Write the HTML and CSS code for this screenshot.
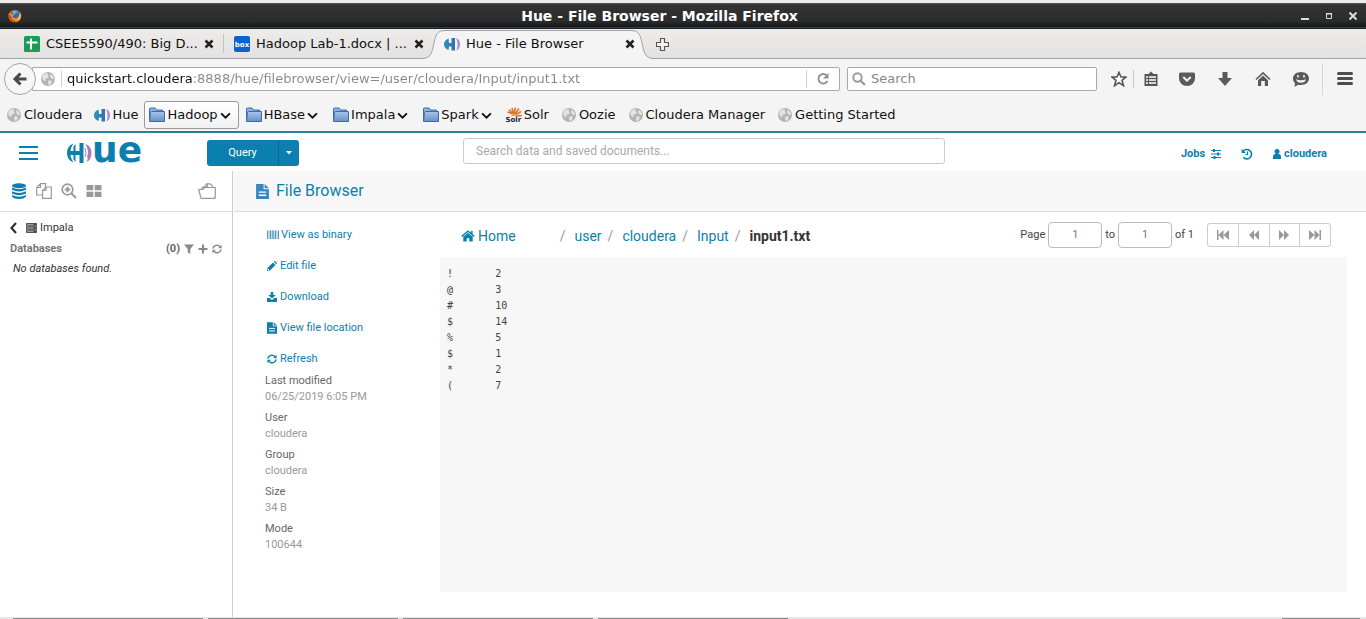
FILE: index.html
```html
<!DOCTYPE html>
<html lang="en">
<head>
<meta charset="utf-8">
<title>Hue - File Browser</title>
<link rel="stylesheet" href="styles.css">
</head>
<body>
<svg class="sprite" aria-hidden="true">
  <defs>
    <linearGradient id="folder-fill" x1="0" y1="0" x2="0" y2="1"><stop offset="0" stop-color="#a9c6ea"/><stop offset="1" stop-color="#6690c8"/></linearGradient>
    <linearGradient id="hue-blue" x1="0" y1="0" x2="1" y2="0"><stop offset="0" stop-color="#2e93b8"/><stop offset="1" stop-color="#2f6fb5"/></linearGradient>
    <symbol id="i-globe" viewBox="0 0 16 16"><circle cx="8" cy="8" r="7" fill="#b4b4b4"/><path d="M2.500 4.500L5 2.500L8 2L7.500 4L9 5.500L7 7.500L5 7.500L6 9.500L4.500 10L2.500 8zM10 3L13 4.500L14 8L12 8L10.500 6.500zM9 9L12 10L10.500 13.500L8.500 14L8 11z" fill="#e4e4e4"/></symbol>
    <symbol id="i-hue" viewBox="0 0 16 16"><path d="M4.500 2.500C1 4 0 6 0 8.500S1.500 13 4.500 14L5 10.500H7.500V14.500H11V2H7.500V7H5z" fill="url(#hue-blue)"/><path d="M12 2C14.800 3 16 5.500 16 8.500S14.500 13.500 12.500 14.500C14 11 14 5.500 12 2z" fill="#a98bc8"/></symbol>
    <symbol id="i-folder" viewBox="0 0 16 16"><path d="M.5 13.500V2Q.5 1 1.500 1H6L7.500 3H13.500V5" fill="#8fb3e0" stroke="#3f6aa8"/><path d="M.5 14.500L1.500 5.500Q1.500 4.500 2.500 4.500H15.500V14.500z" fill="url(#folder-fill)" stroke="#3f6aa8"/></symbol>
    <symbol id="i-chev" viewBox="0 0 10 8"><path d="M1 2L5 6L9 2" fill="none" stroke="#111" stroke-width="1.700"/></symbol>
    <symbol id="i-close" viewBox="0 0 10 10"><path d="M1.500 1.500L8.500 8.500M8.500 1.500L1.500 8.500" stroke="#222" stroke-width="2.600"/></symbol>
    <symbol id="i-file" viewBox="0 0 12 14"><path d="M0 0H7V5H12V14H0zM8 0L12 4H8z" fill="currentColor"/><path d="M2.500 7.500H9.500M2.500 10.500H9.500" stroke="#fff" stroke-width="1.200"/></symbol>
    <symbol id="i-refresh" viewBox="0 0 12 12"><path d="M1 5.500A5 5 0 0 1 9.500 3M11 6.500A5 5 0 0 1 2.500 9" fill="none" stroke="currentColor" stroke-width="1.700"/><path d="M11.500 .8V5H7.300zM.5 11.200V7H4.700z" fill="currentColor"/></symbol>
    <symbol id="i-house" viewBox="0 0 16 14"><path d="M8 3.500L13.500 8V13.500H9.500V9.500H6.500V13.500H2.500V8z" fill="currentColor"/><path d="M.7 7.500L8 1.300L15.300 7.500M12.500 1V4.500" fill="none" stroke="currentColor" stroke-width="1.700"/></symbol>
  </defs>
</svg>

<div class="desktop-edge"></div>
<header class="titlebar">
  <svg class="firefox" viewBox="0 0 16 16" aria-hidden="true"><circle cx="8" cy="8" r="7.200" fill="#e8641b"/><circle cx="8.500" cy="6.500" r="5" fill="#2d6fb4"/><path d="M5 2.500Q9 1 11.500 4Q8 3.500 7.500 6.500Q6 6 5 2.500z" fill="#6db4e6"/><path d="M1 4.500Q2.500 5.500 4.500 5.500Q7 6 6.500 7.500L5 8.500Q6 11 9 10.500Q12.500 10 13 5Q16 8.500 13 12.500Q9 16.500 4 14Q-.5 11 1 4.500z" fill="#f08a24"/><path d="M13.500 4Q16 8 13.500 11.500Q11.500 13.500 9.500 13.500Q13.500 10.500 13.500 4z" fill="#f6cb45"/><path d="M1 6Q1 11 5 14Q8 15.500 10.500 14.800Q4 14 3 8z" fill="#c9331c"/></svg>
  <h1 class="window-title">Hue - File Browser - Mozilla Firefox</h1>
  <div class="window-controls">
    <button type="button" aria-label="Minimize"><svg viewBox="0 0 8 8"><path d="M0 7H8" stroke="#ddd" stroke-width="2"/></svg></button>
    <button type="button" aria-label="Maximize"><svg viewBox="0 0 8 8"><path d="M1.500 2H6.500V6.500H1.500z" fill="none" stroke="#ddd"/><path d="M1 1.500H7" stroke="#ddd"/></svg></button>
    <button type="button" aria-label="Close"><svg viewBox="0 0 8 8"><path d="M.5 .5L7.500 7.500M7.500 .5L.5 7.500" stroke="#ddd" stroke-width="2"/></svg></button>
  </div>
</header>

<nav class="tabs" aria-label="Tabs">
  <div class="tab">
    <svg class="ic16" viewBox="0 0 16 16"><rect width="16" height="16" rx="1.500" fill="#1b9b56"/><path d="M2.500 6.500H13.500M7 2.500V13.500" stroke="#fff" stroke-width="2"/></svg>
    <span class="tab-label">CSEE5590/490: Big D...</span>
    <button type="button" aria-label="Close tab"><svg class="ic10"><use href="#i-close"/></svg></button>
  </div>
  <div class="tab tab-second">
    <svg class="ic16" viewBox="0 0 16 16"><rect width="16" height="16" rx="2" fill="#0a61d0"/><text x="8" y="11" text-anchor="middle" class="box-mark">box</text></svg>
    <span class="tab-label">Hadoop Lab-1.docx | ...</span>
    <button type="button" aria-label="Close tab"><svg class="ic10"><use href="#i-close"/></svg></button>
  </div>
  <div class="tab tab-active">
    <svg class="tab-shape" viewBox="0 0 232 30" aria-hidden="true"><path d="M0 29.500C10 29.500 10 22 12 14C14 5 15 1.500 24 1.500H208C217 1.500 218 5 220 14C222 22 222 29.500 232 29.500V30H0z" fill="#f4f4f4"/><path d="M0 29.500C10 29.500 10 22 12 14C14 5 15 1.500 24 1.500H208C217 1.500 218 5 220 14C222 22 222 29.500 232 29.500" fill="none" stroke="#a3a3a3"/></svg>
    <svg class="ic16"><use href="#i-hue"/></svg>
    <span class="tab-label">Hue - File Browser</span>
    <button type="button" aria-label="Close tab"><svg class="ic10"><use href="#i-close"/></svg></button>
  </div>
  <button type="button" class="new-tab" aria-label="New tab"><svg viewBox="0 0 13 13"><path d="M4.500 .5H8.500V4.500H12.500V8.500H8.500V12.500H4.500V8.500H.5V4.500H4.500z" fill="#f4f4f4" stroke="#555" stroke-width="1.200"/></svg></button>
</nav>

<div class="navbar">
  <button type="button" class="back" aria-label="Back"><svg viewBox="0 0 16 16"><path d="M14.500 8H3.500M8.500 2.500L3 8L8.500 13.500" fill="none" stroke="#4a4a4a" stroke-width="3"/></svg></button>
  <div class="urlbar">
    <svg class="ic16"><use href="#i-globe"/></svg>
    <input class="url" type="text" aria-label="Address" value="quickstart.cloudera:8888/hue/filebrowser/view=/user/cloudera/Input/input1.txt">
    <button type="button" class="reload" aria-label="Reload"><svg viewBox="0 0 14 14"><path d="M10.500 3.200A4.800 4.800 0 1 0 11.500 9" fill="none" stroke="#8d929b" stroke-width="2"/><path d="M12.500 1V6.500H7z" fill="#8d929b"/></svg></button>
  </div>
  <div class="searchbar">
    <svg viewBox="0 0 14 14"><circle cx="5.500" cy="5.500" r="4.200" fill="none" stroke="#999" stroke-width="1.900"/><path d="M8.500 8.500L13 13" stroke="#999" stroke-width="2.200"/></svg>
    <input type="text" aria-label="Search the web" placeholder="Search">
  </div>
  <div class="tools">
    <button type="button" class="tool-star" aria-label="Bookmark"><svg viewBox="0 0 16 16"><path d="M8 1.500L10 6H15L11 9.300L12.500 14.700L8 11.700L3.500 14.700L5 9.300L1 6H6z" fill="#fff" stroke="#555" stroke-width="1.600"/></svg></button>
    <button type="button" class="tool-list" aria-label="Show bookmarks"><svg viewBox="0 0 16 16"><path d="M1.500 3H5.500L8 .5L10.500 3H14.500V15H1.500z" fill="#555"/><path d="M3 6H5M6 6H13M3 9H5M6 9H13M3 12H5M6 12H13" stroke="#fff" stroke-width="1.600"/></svg></button>
    <button type="button" aria-label="Pocket"><svg viewBox="0 0 16 16"><path d="M1.500 1.500H14.500Q16 1.500 16 3V7C16 11.500 12.500 15 8 15S0 11.500 0 7V3Q0 1.500 1.500 1.500z" fill="#5a5a5a"/><path d="M4.300 6L8 9.600L11.700 6" fill="none" stroke="#f4f4f4" stroke-width="2"/></svg></button>
    <button type="button" aria-label="Downloads"><svg viewBox="0 0 16 16"><path d="M5.500 1H10.500V7H15L8 15L1 7H5.500z" fill="#5a5a5a"/></svg></button>
    <button type="button" aria-label="Home page"><svg viewBox="0 0 16 16"><path d="M1 8.500L8 1.800L15 8.500" fill="none" stroke="#5a5a5a" stroke-width="1.600"/><path d="M8 4.500L13 9.300V15H9.800V10H6.200V15H3V9.300z" fill="#5a5a5a"/></svg></button>
    <button type="button" aria-label="Hello"><svg viewBox="0 0 16 16"><path d="M8 1C12.500 1 16 3.800 16 7.500S12.500 14 8 14C7 14 6 14 5 13.700C4 14.600 2.500 15.300 .8 15.300C2 14.200 2.200 13.300 2 12.200C.8 11 0 9.500 0 7.500C0 3.800 3.500 1 8 1z" fill="#5a5a5a"/><path d="M5 4V6.500M11 4V6.500" stroke="#f4f4f4" stroke-width="1.600"/><path d="M3 8.300Q8 10.300 13 8.300Q12 11.800 8 11.800T3 8.300z" fill="#f4f4f4"/></svg></button>
    <button type="button" class="tool-menu" aria-label="Open menu"><svg viewBox="0 0 16 16"><path d="M1.500 2.500H14.500M1.500 7.500H14.500M1.500 12.500H14.500" stroke="#4c4c4c" stroke-width="3" stroke-linecap="round"/></svg></button>
  </div>
</div>

<nav class="bookmarks" aria-label="Bookmarks">
  <a href="#"><svg class="ic16"><use href="#i-globe"/></svg>Cloudera</a>
  <a href="#"><svg class="ic16"><use href="#i-hue"/></svg>Hue</a>
  <button type="button" class="current"><svg class="ic16"><use href="#i-folder"/></svg>Hadoop<svg class="chev"><use href="#i-chev"/></svg></button>
  <button type="button"><svg class="ic16"><use href="#i-folder"/></svg>HBase<svg class="chev"><use href="#i-chev"/></svg></button>
  <button type="button"><svg class="ic16"><use href="#i-folder"/></svg>Impala<svg class="chev"><use href="#i-chev"/></svg></button>
  <button type="button"><svg class="ic16"><use href="#i-folder"/></svg>Spark<svg class="chev"><use href="#i-chev"/></svg></button>
  <a href="#"><svg class="ic16" viewBox="0 0 16 16"><path d="M7 7L1.500 5M7 7L3 2.500M7.500 7L6 1M8 7L9.500 .5M9 7L13 1.500M9.500 8L15 4.500M10 9L16 8.500" stroke="#e5712c" stroke-width="1.600"/><path d="M5 9Q8 4 12 9z" fill="#f0a23c"/><text x="-.5" y="15" class="solr-mark">Solr</text></svg>Solr</a>
  <a href="#"><svg class="ic16"><use href="#i-globe"/></svg>Oozie</a>
  <a href="#"><svg class="ic16"><use href="#i-globe"/></svg>Cloudera Manager</a>
  <a href="#"><svg class="ic16"><use href="#i-globe"/></svg>Getting Started</a>
</nav>

<div class="app">
  <header class="hue-bar">
    <button type="button" class="burger" aria-label="Toggle menu"><svg viewBox="0 0 19 16"><path d="M0 2H19M0 8H19M0 14H19" stroke="#0b7fad" stroke-width="2"/></svg></button>
    <a href="#" class="logo" aria-label="Hue"><svg viewBox="0 0 78 20"><path d="M6.500 .5Q0 3 0 10T6.500 19.500Q3.500 15 3.500 12H6.500V16.500L8.500 19V12H12.500V20H16.500V0H12.500V8H8.500V1L6.500 3.500V8H3.500Q3.500 5 6.500 .5z" fill="#0b7fad"/><path d="M18.500 1Q24.500 3 24.500 10T19.500 19Q21.500 15 20 13Q22.500 9 18.500 1z" fill="#a77bc0"/><path d="M18 5Q20 9 18 14" stroke="#a77bc0" fill="none"/><text x="25" y="19" class="logo-text">ue</text></svg></a>
    <div class="query">
      <button type="button" class="query-main">Query</button>
      <button type="button" class="query-more" aria-label="More editors"><svg viewBox="0 0 6 4"><path d="M0 0H6L3 3.500z" fill="#fff"/></svg></button>
    </div>
    <input class="hue-search" type="text" aria-label="Search data" placeholder="Search data and saved documents...">
    <div class="account">
      <a href="#">Jobs <svg class="sliders" viewBox="0 0 10 10"><path d="M0 1.500H10M0 5H10M0 8.500H10" stroke="currentColor"/><path d="M3 0V3M7 3.500V6.500M3.500 7V10" stroke="currentColor" stroke-width="2"/></svg></a>
      <a href="#" aria-label="History"><svg class="history" viewBox="0 0 12 12"><path d="M2 3.500A4.700 4.700 0 1 1 2.300 9.300" fill="none" stroke="currentColor" stroke-width="1.600"/><path d="M.6 .8V5H4.800z" fill="currentColor"/><path d="M6.500 3.500V6.500H4.500" fill="none" stroke="currentColor" stroke-width="1.200"/></svg></a>
      <a href="#" class="user"><svg viewBox="0 0 8 10"><circle cx="4" cy="2.500" r="2.500" fill="currentColor"/><path d="M0 10V7.500Q0 5 2 5H6Q8 5 8 7.500V10z" fill="currentColor"/></svg>cloudera</a>
    </div>
  </header>

  <div class="columns">
    <aside class="assist">
      <div class="assist-tabs">
        <button type="button" class="on" aria-label="Databases"><svg viewBox="0 0 16 16"><ellipse cx="8" cy="2.700" rx="7" ry="2.500" fill="currentColor"/><path d="M1 4.500Q8 8 15 4.500V6.700Q8 10.200 1 6.700zM1 8.200Q8 11.700 15 8.200V10.400Q8 13.900 1 10.400zM1 11.900Q8 15.400 15 11.900V13.500Q13 16 8 16T1 13.500z" fill="currentColor"/></svg></button>
        <button type="button" aria-label="Documents"><svg viewBox="0 0 16 16"><path d="M6.500 12H.7V4.500L4.500 .7H9.500V4M.7 4.500H4.500V.7M6.500 7.500L10 4H15.300V15.300H6.500zM6.500 7.500H10V4" fill="none" stroke="currentColor" stroke-width="1.200"/></svg></button>
        <button type="button" aria-label="Find"><svg viewBox="0 0 16 16"><circle cx="6.500" cy="6.500" r="5.300" fill="none" stroke="currentColor" stroke-width="1.700"/><path d="M10.500 10.500L15 15M6.500 3.800V9.200M3.800 6.500H9.200" stroke="currentColor" stroke-width="2"/></svg></button>
        <button type="button" aria-label="Dashboards"><svg viewBox="0 0 16 16"><path d="M.5 2H7.300V7.300H.5zM8.700 2H15.500V7.300H8.700zM.5 8.700H7.300V14H.5zM8.700 8.700H15.500V14H8.700z" fill="currentColor"/></svg></button>
        <button type="button" class="open-folder" aria-label="Open"><svg viewBox="0 0 18 16"><path d="M3 15.300L1.500 9.500L.7 6.500H5L7 4.500H17.300V13.500L16.500 15.300H3M4 6.300V4.500L8.500 3.500M6.500 4L8.500 .8H12L14.500 3V4.500M9.500 1V3.500H6.500M17.300 6V15.300" fill="none" stroke="currentColor" stroke-width="1.200"/></svg></button>
      </div>
      <div class="assist-body">
        <a href="#" class="source"><svg class="left" viewBox="0 0 7 12"><path d="M6 1L1.500 6L6 11" fill="none" stroke="#333" stroke-width="2.200"/></svg><svg class="server" viewBox="0 0 11 10"><path d="M.5 .5H10.500V3H.5zM.5 3.800H10.500V6.200H.5zM.5 7H10.500V9.500H.5z" fill="#999" stroke="#444" stroke-width=".9"/><path d="M7.500 1.700H9.500M7.500 5H9.500M7.500 8.300H9.500" stroke="#222"/></svg>Impala</a>
        <div class="db-head">
          <h2>Databases</h2>
          <span class="count">(0)</span>
          <button type="button" aria-label="Filter"><svg viewBox="0 0 10 10"><path d="M0 .5H10L6.300 5V10L3.700 8.300V5z" fill="currentColor"/></svg></button>
          <button type="button" aria-label="Add"><svg viewBox="0 0 10 10"><path d="M5 .5V9.500M.5 5H9.500" stroke="currentColor" stroke-width="2.200"/></svg></button>
          <button type="button" aria-label="Refresh databases"><svg><use href="#i-refresh"/></svg></button>
        </div>
        <p class="none">No databases found.</p>
      </div>
    </aside>

    <main class="main">
      <div class="page-head"><a href="#"><svg><use href="#i-file"/></svg>File Browser</a></div>
      <div class="viewer">
        <div class="side">
          <ul class="actions">
            <li><a href="#"><svg viewBox="0 0 12 10"><path d="M0 .5H12V9H0z" fill="#b9dbe6"/><path d="M.5 .5V9M3.500 .5V9M8.500 .5V9M11.500 .5V9" stroke="#5a9db8"/><path d="M6 .5V9" stroke="#7fb4c8" stroke-width="2"/></svg>View as binary</a></li>
            <li><a href="#"><svg viewBox="0 0 10 10"><path d="M0 10L.7 6.800L6 1.500L8.500 4L3.200 9.300zM6.800 .8L7.300 .3Q7.800 -.1 8.300 .3L9.700 1.700Q10.100 2.200 9.700 2.700L9.200 3.200z" fill="currentColor"/><path d="M1 8L2 9" stroke="#fff"/></svg>Edit file</a></li>
            <li><a href="#"><svg viewBox="0 0 10 10"><path d="M3.700 0H6.300V3H8.800L5 6.500L1.200 3H3.700zM0 6H2.500L5 8L7.500 6H10V10H0z" fill="currentColor"/></svg>Download</a></li>
            <li><a href="#"><svg class="doc"><use href="#i-file"/></svg>View file location</a></li>
            <li><a href="#"><svg><use href="#i-refresh"/></svg>Refresh</a></li>
          </ul>
          <dl class="details">
            <dt>Last modified</dt><dd>06/25/2019 6:05 PM</dd>
            <dt>User</dt><dd>cloudera</dd>
            <dt>Group</dt><dd>cloudera</dd>
            <dt>Size</dt><dd>34 B</dd>
            <dt>Mode</dt><dd>100644</dd>
          </dl>
        </div>
        <section class="content">
          <div class="content-head">
            <nav class="crumbs" aria-label="Path">
              <a href="#" class="home"><svg><use href="#i-house"/></svg>Home</a>
              <span>/</span><a href="#">user</a>
              <span>/</span><a href="#">cloudera</a>
              <span>/</span><a href="#">Input</a>
              <span>/</span><strong>input1.txt</strong>
            </nav>
            <form class="pager">
              <label for="from">Page</label><input id="from" type="text" value="1">
              <label for="to">to</label><input id="to" type="text" value="1">
              <span>of 1</span>
              <div class="steps">
                <button type="button" aria-label="First page"><svg viewBox="0 0 12 10"><path d="M0 0H1.500V10H0zM1.500 5L6.500 0V10zM6.500 5L12 0V10z" fill="currentColor"/></svg></button>
                <button type="button" aria-label="Previous page"><svg viewBox="0 0 12 10"><path d="M1 5L6 0V10zM6 5L11 0V10z" fill="currentColor"/></svg></button>
                <button type="button" aria-label="Next page"><svg viewBox="0 0 12 10"><path d="M6 5L1 0V10zM11 5L6 0V10z" fill="currentColor"/></svg></button>
                <button type="button" aria-label="Last page"><svg viewBox="0 0 12 10"><path d="M12 0H10.500V10H12zM10.500 5L5.500 0V10zM5.500 5L0 0V10z" fill="currentColor"/></svg></button>
              </div>
            </form>
          </div>
          <pre class="file">!	2
@	3
#	10
$	14
%	5
$	1
*	2
(	7</pre>
        </section>
      </div>
    </main>
  </div>
</div>
<div class="taskbar"><i></i><i></i><i></i><i></i><i class="tray"></i></div>
</body>
</html>
```

FILE: styles.css
```css
* { box-sizing: border-box; }
body {
  margin: 0;
  min-height: 100vh;
  display: flex;
  flex-direction: column;
  background: #fff;
  font: 11px/16px Roboto, sans-serif;
  color: #444;
}
button, input { font: inherit; color: inherit; }
button { border: 0; padding: 0; background: none; display: flex; align-items: center; justify-content: center; }
a { color: #0b7fad; text-decoration: none; }
svg { flex: none; }
.sprite { position: absolute; width: 0; height: 0; }
.ic16 { width: 16px; height: 16px; }
.ic10 { width: 10px; height: 10px; display: block; }

/* window frame */
.desktop-edge { height: 3px; background: #ececec; }
.titlebar {
  height: 26px;
  padding: 0 9px 0 8px;
  display: grid;
  grid-template-columns: 64px 1fr 64px;
  align-items: center;
  background: linear-gradient(#555 0, #333 2px, #2c2c2c 18px, #161616 24px, #35506e 24px, #111 26px);
}
.firefox { width: 14px; height: 14px; }
.window-title { margin: 0; padding-right: 46px; text-align: center; color: #fff; font: bold 14px/18px "DejaVu Sans", sans-serif; }
.window-controls { display: flex; justify-content: flex-end; gap: 16px; }
.window-controls svg { width: 8px; height: 8px; }

/* tab strip */
.tabs {
  height: 30px;
  padding-left: 14px;
  display: flex;
  background: linear-gradient(#edecea, #e3e2e0);
  box-shadow: inset 0 -1px #a3a3a3;
  font: 13px/18px "DejaVu Sans", sans-serif;
  color: #111;
}
.tab { width: 210px; padding: 0 10px; display: flex; align-items: center; gap: 6px; }
.tab-label { flex: 1; white-space: nowrap; }
.tab-second { width: 210px; margin-right: -12px; box-shadow: -1px 0 #c4c4c4; clip-path: inset(5px 0 6px -1px); }
.tab-active { width: 232px; padding: 0 19px 0 22px; position: relative; }
.tab-active > * { position: relative; }
.tab-active .tab-shape { position: absolute; left: 0; top: 0; width: 232px; height: 30px; }
.new-tab { padding-left: 2px; }
.new-tab svg { width: 13px; height: 13px; }

/* navigation bar */
.navbar {
  height: 40px;
  padding: 0 12px 0 4px;
  display: flex;
  align-items: center;
  background: #f4f4f4;
  font: 13px/18px "DejaVu Sans", sans-serif;
  color: #888;
}
.back { width: 32px; height: 32px; border: 1px solid #a3a3a3; border-radius: 50%; background: #f7f7f7; z-index: 1; }
.back svg { width: 16px; height: 16px; }
.urlbar, .searchbar { height: 24px; border: 1px solid #a9a9a9; background: #fff; display: flex; align-items: center; }
.urlbar { flex: 1; margin-left: -4px; padding-left: 7px; border-radius: 0 2px 2px 0; }
.url {
  flex: 1;
  min-width: 0;
  height: 16px;
  margin-left: 5px;
  padding: 0 0 0 5px;
  border: 0;
  border-left: 1px solid #d0d0d0;
  outline: 0;
  background: linear-gradient(to right, #111 132px, #888 132px) text;
  -webkit-text-fill-color: transparent;
}
.reload { width: 33px; height: 18px; border-left: 1px solid #d0d0d0; }
.reload svg { width: 14px; height: 14px; }
.searchbar { width: 250px; margin-left: 7px; padding-left: 4px; gap: 5px; border-radius: 2px; }
.searchbar svg { width: 14px; height: 14px; }
.searchbar input { flex: 1; min-width: 0; padding: 0; border: 0; outline: 0; background: none; }
.searchbar input::placeholder { color: #888; }
.tools { display: flex; align-items: center; margin-left: 8px; }
.tools button { width: 38px; height: 18px; }
.tools svg { width: 16px; height: 16px; }
.tools .tool-star { width: 29px; border-right: 1px solid #c8c8c8; }
.tools .tool-list { width: 34px; }
.tools .tool-menu { width: 32px; height: 32px; padding-left: 12px; border-left: 1px solid #d8d8d8; margin-left: 2px; }

/* bookmarks */
.bookmarks {
  min-height: 32px;
  display: flex;
  align-items: center;
  background: #f4f4f4;
  font: 13px/18px "DejaVu Sans", sans-serif;
  color: #111;
}
.bookmarks a, .bookmarks button { display: flex; align-items: center; gap: 2px; padding: 0 6px; color: inherit; white-space: nowrap; }
.bookmarks button { height: 28px; padding: 0 7px 0 6px; border: 1px solid transparent; }
.bookmarks .current { padding: 0 7px 0 4px; border-color: #999; border-radius: 3px; background: linear-gradient(#fff, #f2f2f2); }
.chev { width: 11px; height: 9px; }
.box-mark { font: bold 7px "DejaVu Sans", sans-serif; fill: #fff; }
.solr-mark { font: bold 7px "DejaVu Sans", sans-serif; fill: #222; }

/* Hue header */
.app { flex: 1; display: flex; flex-direction: column; border-top: 2px solid #2a7f9b; }
.hue-bar { min-height: 38px; padding: 1px 39px 0 19px; display: flex; align-items: center; }
.burger svg { width: 19px; height: 16px; }
.logo { margin-left: 29px; height: 20px; }
.logo svg { width: 78px; height: 20px; overflow: visible; }
.logo-text { font: bold 36px "DejaVu Sans", sans-serif; fill: #0b7fad; }
.query { display: flex; width: 92px; height: 26px; margin-left: 62px; border-radius: 3px; background: #0b7fad; color: #fff; }
.query-main { flex: 1; }
.query-more { width: 21px; border-left: 1px solid #086a92; }
.query-more svg { width: 6px; height: 4px; }
.hue-search { flex: 0 1 482px; height: 26px; margin: 0 auto 4px 164px; padding: 0 12px; border: 1px solid #ccc; border-radius: 3px; font-size: 12px; }
.hue-search::placeholder { color: #aaa; }
.account { display: flex; align-items: center; gap: 20px; padding-top: 2px; font-weight: bold; }
.account a { display: flex; align-items: center; gap: 6px; }
.account .user { gap: 3px; }
.account svg { width: 10px; height: 10px; }
.account .history { width: 12px; height: 12px; }
.account .user svg { width: 8px; }

/* assist panel */
.columns { flex: 1; display: flex; }
.assist { width: 233px; border-right: 1px solid #ccc; }
.assist-tabs { height: 41px; padding: 0 16px 0 11px; display: flex; align-items: center; gap: 9px; border-bottom: 1px solid #ddd; color: #999; }
.assist-tabs svg { width: 16px; height: 16px; }
.assist-tabs .on { color: #0b7fad; }
.assist-tabs .open-folder { margin-left: auto; }
.assist-tabs .open-folder svg { width: 18px; }
.assist-body { padding: 8px 10px; }
.source { display: flex; align-items: center; color: #333; }
.left { width: 7px; height: 12px; margin-right: 9px; }
.server { width: 11px; height: 10px; margin-right: 3px; }
.db-head { display: flex; align-items: center; gap: 4px; margin-top: 5px; color: #888; }
.db-head h2 { flex: 1; margin: 0; font: inherit; font-weight: bold; color: #777; }
.count { font-weight: bold; color: #666; }
.db-head svg { width: 10px; height: 10px; }
.none { margin: 4px 3px; font-style: italic; color: #333; }

/* main panel */
.main { flex: 1; min-width: 0; margin-left: 1px; display: flex; flex-direction: column; }
.page-head { height: 41px; padding: 0 22px; display: flex; align-items: center; background: #f7f7f7; border-bottom: 1px solid #ddd; font-size: 16px; line-height: 20px; }
.page-head a { display: flex; align-items: center; gap: 7px; }
.page-head svg { width: 13px; height: 15px; color: #3a86c0; }
.viewer { flex: 1; display: flex; padding: 0 19px 25px 31px; }
.side { width: 175px; padding-top: 15px; }
.actions { list-style: none; margin: 0; padding: 0 2px; display: grid; gap: 15px; }
.actions a { display: flex; align-items: center; gap: 3px; }
.actions svg { width: 10px; height: 10px; }
.actions .doc { height: 12px; }
.actions li:first-child a { gap: 2px; }
.actions li:first-child svg { width: 12px; }
.details { margin: 6px 0 0; }
.details dt { color: #666; }
.details dd { margin: 0 0 5px; color: #999; }
.content { flex: 1; min-width: 0; display: flex; flex-direction: column; }
.content-head { height: 45px; padding: 0 16px 0 21px; display: flex; justify-content: space-between; align-items: center; }
.crumbs { display: flex; align-items: center; font-size: 14px; line-height: 20px; padding-top: 2px; white-space: nowrap; }
.crumbs span { color: #999; padding: 0 9px 0 6px; }
.crumbs strong { color: #333; }
.home { display: flex; align-items: center; gap: 3px; margin-right: 38px; }
.home svg { width: 14px; height: 12px; }
.pager { display: flex; align-items: center; gap: 3px; }
.pager input { width: 54px; height: 26px; padding: 0; text-align: center; border: 1px solid #bbb; border-radius: 4px; color: #777; background: #fff; }
.steps { display: flex; width: 124px; height: 24px; margin-left: 10px; border: 1px solid #ccc; border-radius: 3px; color: #999; }
.steps button { flex: 1; }
.steps button + button { border-left: 1px solid #ccc; }
.steps svg { width: 12px; height: 10px; }
.file { flex: 1; margin: 0; padding: 9px 7px; background: #f7f7f7; color: #444; font: 10px/16px "DejaVu Sans Mono", monospace; tab-size: 8; }

/* desktop panel */
.taskbar { height: 2px; padding: 0 6px 0 13px; display: flex; gap: 5px; background: #e6e6e6; }
.taskbar i { width: 190px; margin-top: 1px; background: #8a8a8a; }
.taskbar .tray { width: 78px; margin-left: auto; }
```
